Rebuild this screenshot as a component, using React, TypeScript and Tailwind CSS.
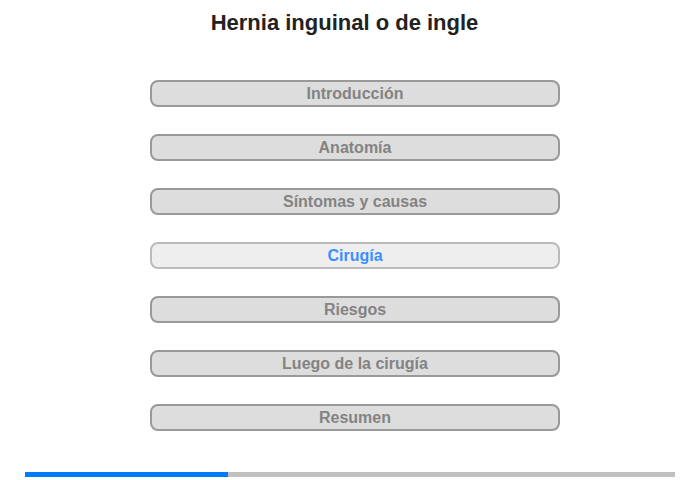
const sections = [
  'Introducción',
  'Anatomía',
  'Síntomas y causas',
  'Cirugía',
  'Riesgos',
  'Luego de la cirugía',
  'Resumen',
]

const active = 3

export default function App() {
  return (
    <div className="h-[480px] w-[700px] bg-white font-['Liberation_Sans',Arial,sans-serif]">
      <h1 className="pt-[10px] pr-[11px] text-center text-[22px] font-bold leading-[26px] text-[#222]">
        Hernia inguinal o de ingle
      </h1>
      <div className="mt-[44px] flex flex-col gap-[27px] pl-[150px]">
        {sections.map((s, i) => (
          <button
            key={s}
            className={
              i === active
                ? 'h-[27px] w-[410px] rounded-[8px] border-2 border-[#bbb] bg-[#eee] text-[16px] font-bold leading-[23px] text-[#3d8eff]'
                : 'h-[27px] w-[410px] rounded-[8px] border-2 border-[#999] bg-[#ddd] text-[16px] font-bold leading-[23px] text-[#838383]'
            }
          >
            {s}
          </button>
        ))}
      </div>
      <div className="mx-[25px] mt-[41px] flex h-[5px] bg-[#c0c0c0]">
        <div className="h-full w-[203px] bg-[#007bff]" />
      </div>
    </div>
  )
}
